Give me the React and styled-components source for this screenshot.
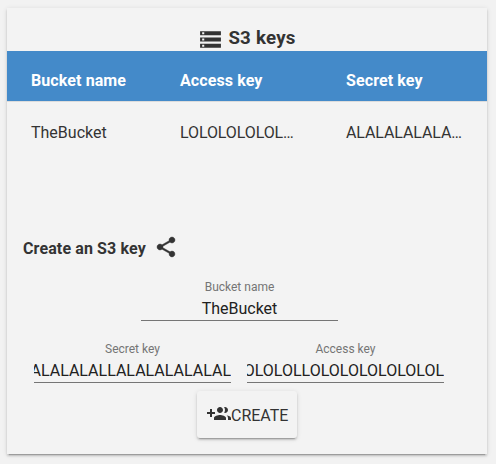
import React from "react";
import styled, { createGlobalStyle } from "styled-components";

const GlobalStyle = createGlobalStyle`
  * { box-sizing: border-box; }
  html, body { margin: 0; background: #f2f2f2; }
  body {
    font: 16px/24px Roboto, "Noto Sans", sans-serif;
    color: #333;
  }
`;

const Page = styled.div`
  height: 464px;
  padding: 8px 0 0 7px;
`;

const Card = styled.main`
  width: 480px;
  height: 446px;
  background: #f3f3f3;
  box-shadow: 0 2px 2px 0 rgba(0, 0, 0, 0.14), 0 1px 5px 0 rgba(0, 0, 0, 0.12),
    0 3px 1px -2px rgba(0, 0, 0, 0.2);
  display: flex;
  flex-direction: column;
`;

const Icon = styled.svg`
  width: ${(p) => p.$size || 24}px;
  height: ${(p) => p.$size || 24}px;
  flex: none;
  fill: #333;
  stroke: #333;
  stroke-width: ${(p) => p.$weight || 0};
`;

const Title = styled.h3`
  display: flex;
  justify-content: center;
  gap: 5px;
  height: 43px;
  margin: 0;
  padding-top: 18px;
  font-size: 18.72px;
  line-height: 24px;
  letter-spacing: 0.22px;

  ${Icon} {
    margin-top: 1px;
  }
`;

const Row = styled.div`
  display: grid;
  grid-template-columns: 149px 166px 1fr;
  align-items: center;
  padding: ${(p) => (p.$head ? "10px 0 0 24px" : "0 0 0 24px")};
  height: ${(p) => (p.$head ? 51 : 62)}px;
  background: ${(p) => (p.$head ? "#448ac9" : "transparent")};
  color: ${(p) => (p.$head ? "#fff" : "#333")};
  font-weight: ${(p) => (p.$head ? 700 : 400)};
  letter-spacing: ${(p) => (p.$head ? "0.1px" : "normal")};
  border-bottom: ${(p) => (p.$head ? "1px solid #dcdcdc" : "none")};
`;

const KeyText = styled.span`
  letter-spacing: -0.1px;
`;

const Subtitle = styled.h4`
  display: flex;
  gap: 8px;
  margin: 70px 0 0 16px;
  height: 28px;
  font-size: 16px;
  line-height: 29px;
  letter-spacing: 0.12px;

  ${Icon} {
    margin-top: 1px;
  }
`;

const Fields = styled.div`
  display: flex;
  justify-content: center;
  gap: 16px;
  height: 62px;
  padding-top: 16px;
  padding-right: ${(p) => p.$shift}px;
`;

const Field = styled.div`
  width: 197px;
  height: 43px;
  border-bottom: 1px solid #757575;
`;

const Label = styled.div`
  height: 19px;
  font-size: 12px;
  line-height: 18px;
  color: #757575;
  text-align: center;
`;

const Value = styled.div`
  display: flex;
  justify-content: ${(p) => (p.$end ? "flex-end" : "center")};
  overflow: hidden;
  white-space: nowrap;
  color: #212121;
  line-height: 24px;
`;

const Button = styled.button`
  display: flex;
  align-items: center;
  align-self: center;
  width: 100px;
  height: 47px;
  margin: 5px 0 0 0;
  padding: 0 0 0 10px;
  border: 0;
  border-radius: 3px;
  background: #f3f3f3;
  color: #333;
  font: inherit;
  box-shadow: 0 2px 2px 0 rgba(0, 0, 0, 0.14), 0 1px 5px 0 rgba(0, 0, 0, 0.12),
    0 3px 1px -2px rgba(0, 0, 0, 0.2);

  ${Icon} {
    margin-bottom: 1px;
  }
`;

const ButtonText = styled.span`
  padding-top: 2px;
`;

function TextField({ label, value, end }) {
  return (
    <Field>
      <Label>{label}</Label>
      <Value $end={end}>{value}</Value>
    </Field>
  );
}

export default function App() {
  return (
    <Page>
      <GlobalStyle />
      <Card>
        <Title>
          <Icon $size={25} viewBox="0 0 24 24">
            <path d="M2 20h20v-4H2v4zm2-3h2v2H4v-2zM2 4v4h20V4H2zm4 3H4V5h2v2zm-4 7h20v-4H2v4zm2-3h2v2H4v-2z" />
          </Icon>
          S3 keys
        </Title>
        <Row $head>
          <span>Bucket name</span>
          <span>Access key</span>
          <span>Secret key</span>
        </Row>
        <Row>
          <span>TheBucket</span>
          <KeyText>LOLOLOLOLOL…</KeyText>
          <KeyText>ALALALALALA…</KeyText>
        </Row>
        <Subtitle>
          Create an S3 key
          <Icon $weight={0.4} viewBox="0 0 24 24">
            <path d="M18 16.08c-.76 0-1.44.3-1.96.77L8.91 12.7c.05-.23.09-.46.09-.7s-.04-.47-.09-.7l7.05-4.11c.54.5 1.25.81 2.04.81 1.66 0 3-1.34 3-3s-1.34-3-3-3-3 1.34-3 3c0 .24.04.47.09.7L8.04 9.81C7.5 9.31 6.79 9 6 9c-1.66 0-3 1.34-3 3s1.34 3 3 3c.79 0 1.5-.31 2.04-.81l7.12 4.16c-.05.21-.08.43-.08.65 0 1.61 1.31 2.92 2.92 2.92 1.61 0 2.92-1.31 2.92-2.92s-1.31-2.92-2.92-2.92z" />
          </Icon>
        </Subtitle>
        <Fields $shift={15}>
          <TextField label="Bucket name" value="TheBucket" />
        </Fields>
        <Fields $shift={16}>
          <TextField label="Secret key" value="ALALALALLALALALALALAL" end />
          <TextField label="Access key" value="OLOLOLLOLOLOLOLOLOLOL" end />
        </Fields>
        <Button>
          <Icon viewBox="0 0 24 24">
            <path d="M8 10H5V7H3v3H0v2h3v3h2v-3h3v-2zm10 1c1.66 0 2.99-1.34 2.99-3S19.66 5 18 5c-.32 0-.63.05-.91.14.57.81.9 1.79.9 2.86s-.34 2.04-.9 2.86c.28.09.59.14.91.14zm-5 0c1.66 0 2.99-1.34 2.99-3S14.66 5 13 5c-1.66 0-3 1.34-3 3s1.34 3 3 3zm6.62 2.16c.83.73 1.38 1.66 1.38 2.84v2h3v-2c0-1.54-2.37-2.49-4.38-2.84zM13 13c-2 0-6 1-6 3v2h12v-2c0-2-4-3-6-3z" />
          </Icon>
          <ButtonText>CREATE</ButtonText>
        </Button>
      </Card>
    </Page>
  );
}
